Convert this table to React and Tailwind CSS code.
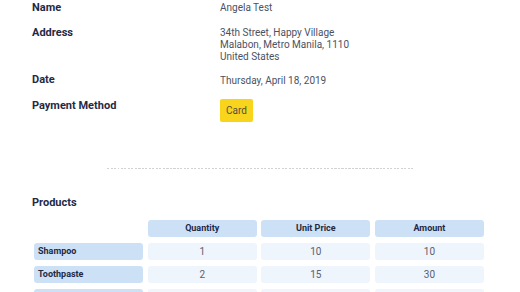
const products = [
    { name: 'Shampoo', quantity: 1, price: 10, amount: 10 },
    { name: 'Toothpaste', quantity: 2, price: 15, amount: 30 },
    { name: 'Soap', quantity: 3, price: 5, amount: 15 },
];

function Label({ children, className = '' }) {
    return (
        <div className={`w-[188px] shrink-0 text-[11px] leading-[12px] font-bold text-[#1f2a44] ${className}`}>
            {children}
        </div>
    );
}

function Value({ children, className = '' }) {
    return <div className={`text-[10px] leading-[12px] text-[#4b5263] ${className}`}>{children}</div>;
}

export default function App() {
    return (
        <div className="w-[520px] h-[292px] overflow-hidden bg-white font-['Roboto',sans-serif]">
            <div className="px-8 pt-[2px]">
                {/* Order details */}
                <div className="flex">
                    <Label>Name</Label>
                    <Value>Angela Test</Value>
                </div>
                <div className="flex mt-[13px]">
                    <Label>Address</Label>
                    <Value>
                        34th Street, Happy Village
                        <br />
                        Malabon, Metro Manila, 1110
                        <br />
                        United States
                    </Value>
                </div>
                <div className="flex mt-[11px]">
                    <Label>Date</Label>
                    <Value className="mt-px">Thursday, April 18, 2019</Value>
                </div>
                <div className="flex mt-[12px]">
                    <Label className="mt-px">Payment Method</Label>
                    <div className="h-[23px] px-[6px] rounded-[2px] bg-[#f8d41c] text-[10px] leading-[23px] text-[#55503a]">
                        Card
                    </div>
                </div>
            </div>

            {/* Divider */}
            <div className="mt-[46px] mx-auto w-[306px] h-px bg-[repeating-linear-gradient(to_right,#d2d2d2_0_2px,transparent_2px_3.5px)]" />

            {/* Products */}
            <div className="px-8">
                <div className="mt-[28px] text-[11px] leading-[12px] font-bold text-[#1f2a44]">Products</div>
                <div className="mt-[11px] ml-[2px] w-[450px] grid grid-cols-4 gap-x-[4.5px] gap-y-[6px] text-[9px]">
                    <div />
                    {['Quantity', 'Unit Price', 'Amount'].map((h) => (
                        <div
                            key={h}
                            className="h-[17px] rounded-[3px] bg-[#cde1f6] text-center leading-[17px] font-bold text-[#1f2a44]"
                        >
                            {h}
                        </div>
                    ))}
                    {products.map((p) => (
                        <div key={p.name} className="contents">
                            <div className="h-[17px] rounded-[3px] bg-[#cde1f6] pl-[4px] leading-[17px] font-bold text-[#1f2a44]">
                                {p.name}
                            </div>
                            <div className="h-[17px] rounded-[3px] bg-[#eff5fc] text-center leading-[17px] text-[10px] text-[#5a6070]">
                                {p.quantity}
                            </div>
                            <div className="h-[17px] rounded-[3px] bg-[#eff5fc] text-center leading-[17px] text-[10px] text-[#5a6070]">
                                {p.price}
                            </div>
                            <div className="h-[17px] rounded-[3px] bg-[#eff5fc] text-center leading-[17px] text-[10px] text-[#5a6070]">
                                {p.amount}
                            </div>
                        </div>
                    ))}
                </div>
            </div>
        </div>
    );
}
